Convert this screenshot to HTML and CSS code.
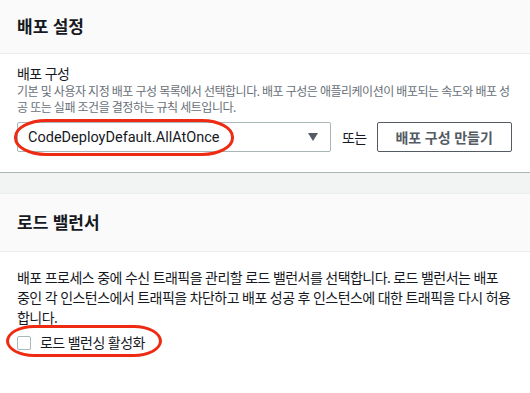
FILE: index.html
```html
<!DOCTYPE html>
<html lang="ko">
<head>
<meta charset="utf-8">
<title>배포 설정</title>
<link rel="stylesheet" href="styles.css">
</head>
<body>
<div class="panel">
  <div class="panel-header first"><h2 class="h2">배포 설정</h2></div>
  <div class="panel-body">
    <div class="label">배포 구성</div>
    <div class="desc">기본 및 사용자 지정 배포 구성 목록에서 선택합니다. 배포 구성은 애플리케이션이 배포되는 속도와 배포 성공 또는 실패 조건을 결정하는 규칙 세트입니다.</div>
    <div class="row">
      <div class="select">
        <span class="value">CodeDeployDefault.AllAtOnce</span>
        <svg class="caret" width="10" height="8" viewBox="0 0 10 8"><path d="M0 0h10L5 8z" fill="#545b64"/></svg>
        <span class="mark mark-select"></span>
      </div>
      <span class="or">또는</span>
      <button class="btn">배포 구성 만들기</button>
    </div>
  </div>
</div>
<div class="divider"></div>
<div class="panel">
  <div class="panel-header"><h2 class="h2">로드 밸런서</h2></div>
  <div class="panel-body second">
    <p class="text">배포 프로세스 중에 수신 트래픽을 관리할 로드 밸런서를 선택합니다. 로드 밸런서는 배포 중인 각 인스턴스에서 트래픽을 차단하고 배포 성공 후 인스턴스에 대한 트래픽을 다시 허용합니다.</p>
    <label class="check">
      <span class="box"></span>
      <span>로드 밸런싱 활성화</span>
      <span class="mark mark-check"></span>
    </label>
  </div>
</div>
</body>
</html>
```

FILE: styles.css
```css
* { box-sizing: border-box; }
body {
  margin: 0;
  background: #fff;
  color: #16191f;
  font-family: "Noto Sans", "Noto Sans CJK KR", sans-serif;
  font-size: 14px;
  letter-spacing: -0.55px;
}

.panel-header {
  background: #fafafa;
  border-top: 1px solid #eaeded;
  border-bottom: 1px solid #eaeded;
  padding: 17px 17px;
}
.panel-header.first { border-top: 0; padding-top: 15px; padding-bottom: 15px; }
.h2 { margin: 0; font-size: 17px; line-height: 23px; font-weight: 700; letter-spacing: 0; }

.panel-body { padding: 10px 17px 20px; }
.panel-body.second { padding-top: 16px; padding-bottom: 40px; }

.label { line-height: 20px; }
.desc { font-size: 12px; line-height: 16px; color: #687078; letter-spacing: -0.5px; }

.row { display: flex; align-items: center; margin-top: 6px; white-space: nowrap; }
.select {
  position: relative;
  flex: none;
  width: 314px;
  height: 30px;
  border: 1px solid #aab7b8;
  border-radius: 2px;
  display: flex;
  align-items: center;
  padding: 0 12px 0 10px;
}
.value { flex: 1; font-family: Roboto, "Noto Sans", sans-serif; font-size: 14.5px; letter-spacing: 0; }
.caret { display: block; }
.or { margin: 0 10px 0 11px; }
.btn {
  flex: none;
  font: inherit;
  font-weight: 700;
  letter-spacing: 0;
  color: #545b64;
  background: #fff;
  border: 1px solid #545b64;
  border-radius: 2px;
  width: 135px;
  height: 30px;
  padding: 0;
}

.divider {
  height: 21px;
  background: #f2f3f3;
  border-top: 1px solid #aab7b8;
}

.text { margin: 0; line-height: 20px; }
.check {
  position: relative;
  display: flex;
  align-items: center;
  margin-top: 5px;
  line-height: 20px;
  gap: 9px;
}
.box {
  flex: none;
  width: 14px;
  height: 14px;
  border: 1px solid #aab7b8;
  border-radius: 2px;
}

.mark {
  position: absolute;
  border: 3px solid #ef2a12;
  border-radius: 32px / 18px;
}
.mark-select { left: -4px; top: -4px; width: 220px; height: 37px; }
.mark-check { left: -11px; top: -8px; width: 156px; height: 32px; border-radius: 28px / 16px; }
```
